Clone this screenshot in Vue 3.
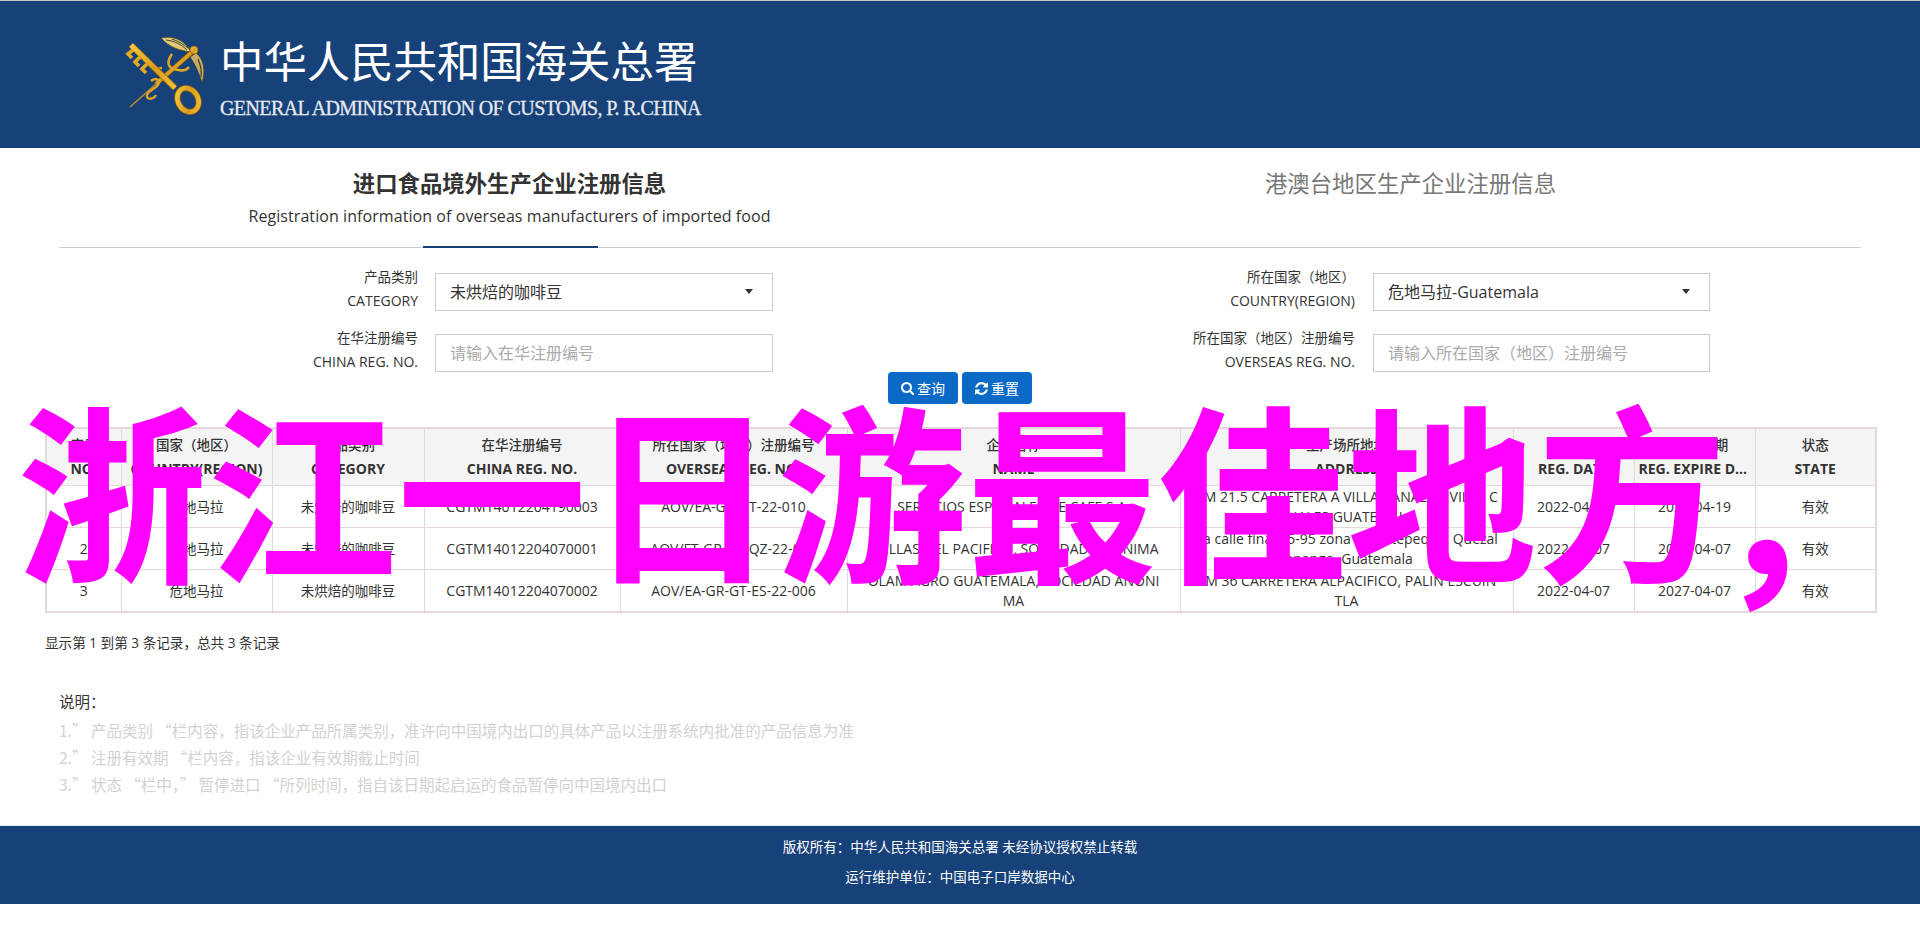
<script setup>
const filterCols = [
  [
    { zh: "产品类别", en: "CATEGORY", type: "select", value: "未烘焙的咖啡豆" },
    { zh: "在华注册编号", en: "CHINA REG. NO.", type: "input", value: "请输入在华注册编号" },
  ],
  [
    { zh: "所在国家（地区）", en: "COUNTRY(REGION)", type: "select", value: "危地马拉-Guatemala" },
    { zh: "所在国家（地区）注册编号", en: "OVERSEAS REG. NO.", type: "input", value: "请输入所在国家（地区）注册编号" },
  ],
];

const columns = [
  { zh: "序号", en: "NO.", width: 75 },
  { zh: "国家（地区）", en: "COUNTRY(REGION)", width: 151 },
  { zh: "产品类别", en: "CATEGORY", width: 152 },
  { zh: "在华注册编号", en: "CHINA REG. NO.", width: 196 },
  { zh: "所在国家（地区）注册编号", en: "OVERSEAS REG. NO.", width: 227 },
  { zh: "企业名称", en: "NAME", width: 333 },
  { zh: "生产场所地址", en: "ADDRESS", width: 333 },
  { zh: "注册日期", en: "REG. DATE", width: 121 },
  { zh: "注册有效期", en: "REG. EXPIRE DATE", width: 121 },
  { zh: "状态", en: "STATE", width: 121 },
];

const rows = [
  ["1", "危地马拉", "未烘焙的咖啡豆", "CGTM14012204190003", "AOV/EA-GR-GT-22-010", "SERVICIOS ESPECIALES DE CAFE S.A.", "KM 21.5 CARRETERA A VILLA CANALES, VILLA CANALES GUATEMALA", "2022-04-19", "2027-04-19", "有效"],
  ["2", "危地马拉", "未烘焙的咖啡豆", "CGTM14012204070001", "AOV/FT-GR-GT-QZ-22-002", "TRILLAS DEL PACIFICO, SOCIEDAD ANONIMA", "1a calle final 25-95 zona 1 Coatepeque, Quezaltenango, Guatemala", "2022-04-07", "2027-04-07", "有效"],
  ["3", "危地马拉", "未烘焙的咖啡豆", "CGTM14012204070002", "AOV/EA-GR-GT-ES-22-006", "OLAM AGRO GUATEMALA, SOCIEDAD ANONIMA", "KM 36 CARRETERA ALPACIFICO, PALIN ESCUINTLA", "2022-04-07", "2027-04-07", "有效"],
];

const notes = [
  "1.” 产品类别 “栏内容，指该企业产品所属类别，准许向中国境内出口的具体产品以注册系统内批准的产品信息为准",
  "2.” 注册有效期 “栏内容，指该企业有效期截止时间",
  "3.” 状态 “栏中，” 暂停进口 “所列时间，指自该日期起启运的食品暂停向中国境内出口",
];

const isCjk = (text) => /[\u4e00-\u9fa5]/.test(text);
</script>

<template>
  <div class="page">
    <header class="site-header">
      <div class="brand">
        <svg class="emblem" viewBox="0 0 90 90">
          <defs>
            <linearGradient id="gold" x1="0" y1="0" x2="1" y2="1">
              <stop offset="0" stop-color="#f6c93f" />
              <stop offset="0.55" stop-color="#d99d1c" />
              <stop offset="1" stop-color="#f4c033" />
            </linearGradient>
          </defs>
          <path d="M41 8C53 5 65 10 71 22C62 21 49 18 41 8Z" fill="#e2c876" stroke="#4a4a2a" stroke-width="0.8" />
          <path d="M46 10C54 11 61 14 67 20M52 9C58 11 63 14 68 18" fill="none" stroke="#39483a" stroke-width="1" />
          <path d="M76 23C84 29 86 41 82 53C79 43 75 34 70 27Z" fill="#c4ad63" stroke="#3c3c24" stroke-width="0.8" />
          <path d="M78 29C81 36 82 41 81 47" fill="none" stroke="#2c3a3a" stroke-width="1.2" />
          <path d="M10 77L36 54" stroke="#b98a36" stroke-width="1.6" fill="none" />
          <path d="M36 54L72 22" stroke="#8a5e10" stroke-width="5" fill="none" />
          <path d="M36 54L72 22" stroke="url(#gold)" stroke-width="3.6" fill="none" />
          <circle cx="74" cy="20" r="4" fill="url(#gold)" stroke="#8a5e10" stroke-width="0.7" />
          <path d="M52 24C47 31 47 37 54 39C60 41 66 41 69 37" fill="none" stroke="#e0a526" stroke-width="2.6" />
          <path d="M42 38C37 38 36 42 40 45M31 51C36 47 41 50 38 55C35 59 29 60 27 65C26 70 33 70 36 65" fill="none" stroke="#e0a526" stroke-width="2.4" />
          <path d="M11 15L55 58" stroke="#8a5e10" stroke-width="6.4" fill="none" />
          <path d="M11 15L55 58" stroke="url(#gold)" stroke-width="4.8" fill="none" />
          <path d="M13 20L8 24L12 28M20 27L15 32L19 36M27 34L22 39L26 43" fill="none" stroke="#e5aa24" stroke-width="3.6" />
          <ellipse cx="68" cy="70" rx="10" ry="12.5" transform="rotate(-30 68 70)" fill="none" stroke="#8a5e10" stroke-width="6.2" />
          <ellipse cx="68" cy="70" rx="10" ry="12.5" transform="rotate(-30 68 70)" fill="none" stroke="url(#gold)" stroke-width="4.6" />
        </svg>
        <div class="brand-text">
          <div class="brand-zh">中华人民共和国海关总署</div>
          <div class="brand-en">GENERAL ADMINISTRATION OF CUSTOMS, P. R.CHINA</div>
        </div>
      </div>
    </header>

    <main>
      <nav class="tabs">
        <div class="tab active">
          <h2>进口食品境外生产企业注册信息</h2>
          <p>Registration information of overseas manufacturers of imported food</p>
        </div>
        <div class="tab">
          <h2>港澳台地区生产企业注册信息</h2>
        </div>
      </nav>

      <form class="filter-form" @submit.prevent>
        <div v-for="(col, i) in filterCols" :key="i" class="filter-col">
          <div v-for="field in col" :key="field.en" class="field">
            <label>
              <span class="label-zh">{{ field.zh }}</span>
              <span>{{ field.en }}</span>
            </label>
            <div v-if="field.type === 'select'" class="control select">
              {{ field.value }}
              <i class="caret"></i>
            </div>
            <div v-else class="control placeholder">{{ field.value }}</div>
          </div>
        </div>
      </form>

      <div class="actions">
        <button type="button" class="btn">
          <svg viewBox="64 128 1664 1664"><path d="M1216 832q0-185-131.5-316.5t-316.5-131.5-316.5 131.5-131.5 316.5 131.5 316.5 316.5 131.5 316.5-131.5 131.5-316.5zm512 832q0 52-38 90t-90 38q-54 0-90-38l-343-342q-179 124-399 124-143 0-273.5-55.5t-225-150-150-225-55.5-273.5 55.5-273.5 150-225 225-150 273.5-55.5 273.5 55.5 225 150 150 225 55.5 273.5q0 220-124 399l343 343q37 37 37 90z" /></svg>
          查询
        </button>
        <button type="button" class="btn">
          <svg viewBox="128 128 1536 1536"><path d="M1639 1056q0 5-1 7-64 268-268 434.5t-478 166.5q-146 0-282.5-55t-243.5-157l-129 129q-19 19-45 19t-45-19-19-45v-448q0-26 19-45t45-19h448q26 0 45 19t19 45-19 45l-137 137q71 66 161 102t187 36q134 0 250-65t186-179q11-17 53-117 8-23 30-23h192q13 0 22.5 9.5t9.5 22.5zm25-800v448q0 26-19 45t-45 19h-448q-26 0-45-19t-19-45 19-45l138-138q-148-137-349-137-134 0-250 65t-186 179q-11 17-53 117-8 23-30 23h-199q-13 0-22.5-9.5t-9.5-22.5v-7q65-268 270-434.5t480-166.5q146 0 284 55.5t245 156.5l130-129q19-19 45-19t45 19 19 45z" /></svg>
          重置
        </button>
      </div>

      <table class="result-table">
        <colgroup>
          <col v-for="c in columns" :key="c.en" :style="{ width: c.width + 'px' }" />
        </colgroup>
        <thead>
          <tr>
            <th v-for="c in columns" :key="c.en">
              <span class="th-zh">{{ c.zh }}</span>
              <span class="th-en">{{ c.en }}</span>
            </th>
          </tr>
        </thead>
        <tbody>
          <tr v-for="row in rows" :key="row[0]">
            <td v-for="(cell, i) in row" :key="i" :class="{ cjk: isCjk(cell) }">{{ cell }}</td>
          </tr>
        </tbody>
      </table>

      <p class="summary">显示第 1 到第 3 条记录，总共 3 条记录</p>

      <section class="notes">
        <h3>说明：</h3>
        <p v-for="n in notes" :key="n">{{ n }}</p>
      </section>
    </main>

    <footer class="site-footer">
      <p>版权所有：中华人民共和国海关总署 未经协议授权禁止转载</p>
      <p>运行维护单位：中国电子口岸数据中心</p>
    </footer>

    <div class="watermark">浙江一日游最佳地方<span class="watermark-comma">，</span></div>
  </div>
</template>

<style scoped>
.page {
  position: relative;
  height: 942px;
  overflow: hidden;
  background: #fff;
  color: #333;
  font-family: "Open Sans", "Noto Sans CJK SC", sans-serif;
  font-size: 14px;
}

.site-header {
  height: 147px;
  border-top: 1px solid #c8c8c8;
  background: #164179;
}

.brand {
  display: flex;
  align-items: flex-start;
  padding: 29px 0 0 120px;
}

.emblem {
  width: 90px;
  height: 90px;
}

.brand-text {
  margin: 9px 0 0 10px;
}

.brand-zh {
  color: #fff;
  font-size: 43.4px;
  line-height: 46px;
  white-space: nowrap;
}

.brand-en {
  margin-top: 13px;
  color: #e6e9ef;
  font-family: "Liberation Serif", serif;
  font-size: 20px;
  line-height: 20px;
  letter-spacing: -0.6px;
  white-space: nowrap;
  -webkit-text-stroke: 0.3px #e6e9ef;
}

.tabs {
  display: flex;
  height: 99px;
  margin: 0 59px;
  border-bottom: 1px solid #ccc;
}

.tab {
  position: relative;
  flex: 1;
  padding-top: 22px;
  text-align: center;
}

.tab h2 {
  margin: 0;
  color: #777;
  font-size: 22.4px;
  font-weight: 400;
  line-height: 28px;
}

.tab p {
  margin: 6px 0 0;
  color: #333;
  font-size: 16px;
  line-height: 24px;
  letter-spacing: 0.07px;
}

.tab.active h2 {
  color: #333;
  font-weight: 700;
}

.tab.active::after {
  content: "";
  position: absolute;
  left: 50%;
  bottom: -1px;
  width: 175px;
  height: 2px;
  margin-left: -87px;
  background: #164179;
}

.filter-form {
  display: flex;
  margin-top: 25px;
}

.filter-col {
  display: flex;
  flex-direction: column;
  gap: 23px;
  width: 938px;
}

.field {
  display: flex;
  gap: 17px;
  height: 38px;
}

.field label {
  display: flex;
  flex-direction: column;
  width: 418px;
  margin-top: -8px;
  text-align: right;
  line-height: 24px;
}

.filter-col + .filter-col .field {
  gap: 18px;
}

.filter-col + .filter-col .field label {
  width: 417px;
}

.filter-col + .filter-col .control {
  width: 337px;
}

.label-zh {
  font-size: 13.5px;
}

.control {
  position: relative;
  box-sizing: border-box;
  width: 338px;
  height: 38px;
  padding: 0 14px;
  border: 1px solid #ccc;
  color: #333;
  font-size: 16px;
  line-height: 36px;
}

.placeholder {
  color: #aaa;
}

.caret {
  position: absolute;
  top: 15px;
  right: 19px;
  border-top: 5px solid #333;
  border-left: 4.5px solid transparent;
  border-right: 4.5px solid transparent;
}

.actions {
  display: flex;
  justify-content: center;
  gap: 4px;
}

.btn {
  display: flex;
  align-items: center;
  justify-content: center;
  gap: 3px;
  width: 70px;
  height: 32px;
  padding: 0;
  border: none;
  border-radius: 4px;
  background: #0a6ac5;
  color: #fff;
  font-family: inherit;
  font-size: 14px;
}

.btn svg {
  width: 13px;
  height: 13px;
  fill: #fff;
}

.result-table {
  width: 1830px;
  margin: 23px 0 0 45px;
  border: 2px solid #e6d8d8;
  border-collapse: collapse;
  table-layout: fixed;
}

.result-table th,
.result-table td {
  border: 1px solid #e6d8d8;
  text-align: center;
  vertical-align: middle;
}

.result-table th {
  height: 56px;
  padding: 0 4px;
  background: #f4f4f4;
  font-weight: 400;
  line-height: 24px;
}

.th-zh,
.th-en {
  display: block;
  overflow: hidden;
  text-overflow: ellipsis;
  white-space: nowrap;
}

.th-zh {
  font-size: 13.5px;
  font-weight: 500;
}

.th-en {
  font-weight: 700;
}

.result-table td {
  height: 41px;
  padding: 0 14.5px;
  line-height: 20px;
  word-break: break-all;
}

.result-table td.cjk {
  font-size: 13.5px;
}

.summary {
  margin: 20px 0 0 45px;
  font-size: 13.6px;
  line-height: 20px;
}

.notes {
  margin: 35px 0 0 59px;
  font-family: "Noto Sans CJK SC", sans-serif;
  font-size: 15.5px;
}

.notes h3 {
  margin: 0 0 2px;
  font-size: 15.5px;
  font-weight: 400;
  line-height: 27px;
}

.notes p {
  margin: 0;
  color: #d2d2d2;
  line-height: 27px;
}

.site-footer {
  position: absolute;
  top: 825px;
  left: 0;
  right: 0;
  box-sizing: border-box;
  height: 79px;
  padding-top: 6px;
  border-top: 1px solid #eee;
  background: #164179;
  background-clip: padding-box;
  color: #fff;
  font-size: 13.5px;
  text-align: center;
}

.site-footer p {
  margin: 0;
  line-height: 30px;
}

.watermark {
  position: absolute;
  top: 391px;
  left: 17px;
  color: #ff00ff;
  font-family: "Noto Sans CJK SC", sans-serif;
  font-size: 190px;
  font-weight: 700;
  line-height: 1;
  white-space: nowrap;
}

.watermark-comma {
  position: relative;
  top: 17px;
  left: -14px;
}
</style>
